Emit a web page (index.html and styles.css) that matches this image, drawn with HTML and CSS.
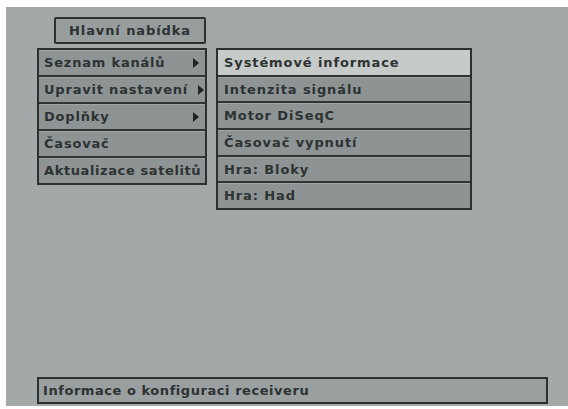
FILE: index.html
```html
<!DOCTYPE html>
<html lang="cs">
<head>
<meta charset="utf-8">
<link rel="stylesheet" href="styles.css">
</head>
<body>
<div class="screen">
  <div class="title">Hlavní nabídka</div>
  <div class="menus">
    <div class="menu menu-main">
      <div class="row"><span>Seznam kanálů</span><span class="arrow"></span></div>
      <div class="row"><span>Upravit nastavení</span><span class="arrow"></span></div>
      <div class="row"><span>Doplňky</span><span class="arrow"></span></div>
      <div class="row"><span>Časovač</span></div>
      <div class="row"><span>Aktualizace satelitů</span></div>
    </div>
    <div class="menu menu-sub">
      <div class="row active"><span>Systémové informace</span></div>
      <div class="row"><span>Intenzita signálu</span></div>
      <div class="row"><span>Motor DiSeqC</span></div>
      <div class="row"><span>Časovač vypnutí</span></div>
      <div class="row"><span>Hra: Bloky</span></div>
      <div class="row"><span>Hra: Had</span></div>
    </div>
  </div>
  <div class="status">Informace o konfiguraci receiveru</div>
</div>
</body>
</html>
```

FILE: styles.css
```css
html, body {
  margin: 0;
  padding: 0;
  background: #ffffff;
}
body {
  font-family: "DejaVu Sans", "Liberation Sans", sans-serif;
  font-weight: bold;
  font-size: 13px;
  color: #2d3232;
}
.screen {
  margin: 7px 0 0 6px;
  width: 562px;
  height: 399px;
  background: #a3a8a8;
  display: flex;
  flex-direction: column;
  box-sizing: border-box;
  padding-top: 10px;
}
.title {
  margin-left: 48px;
  width: 152px;
  height: 27px;
  box-sizing: border-box;
  border: 2px solid #2b3131;
  border-radius: 2px;
  background: #979d9d;
  display: flex;
  align-items: center;
  justify-content: center;
  letter-spacing: 0.9px;
}
.menus {
  display: flex;
  margin-top: 4px;
  margin-left: 31px;
  gap: 9px;
  align-items: flex-start;
}
.menu {
  border: 2px solid #2b3131;
  background: #2f3535;
  display: flex;
  flex-direction: column;
  gap: 2px;
}
.menu-main { width: 166px; }
.menu-sub { width: 252px; }
.row {
  height: 25px;
  background: #8e9494;
  display: flex;
  align-items: center;
  justify-content: space-between;
  padding: 0 6px 0 5px;
  letter-spacing: 0.8px;
  white-space: nowrap;
  box-shadow: inset 0 1px 0 #a0a6a6;
}
.menu-sub .row {
  padding-left: 6px;
  height: 24.7px;
  letter-spacing: 0.9px;
}
.row.active {
  background: #c6cac9;
  box-shadow: none;
}
.arrow {
  flex: none;
  width: 0;
  height: 0;
  border-top: 5px solid transparent;
  border-bottom: 5px solid transparent;
  border-left: 6px solid #1f2424;
}
.menu-main .row:nth-child(2) { padding-right: 1px; }
.menu-main .row:nth-child(5) { padding-right: 0; letter-spacing: 0.6px; }
.status {
  margin-top: auto;
  margin-bottom: 2px;
  margin-left: 31px;
  width: 511px;
  height: 27px;
  box-sizing: border-box;
  border: 2px solid #2b3131;
  background: #9aa0a0;
  display: flex;
  align-items: center;
  padding-left: 4px;
  letter-spacing: 0.55px;
}
```
